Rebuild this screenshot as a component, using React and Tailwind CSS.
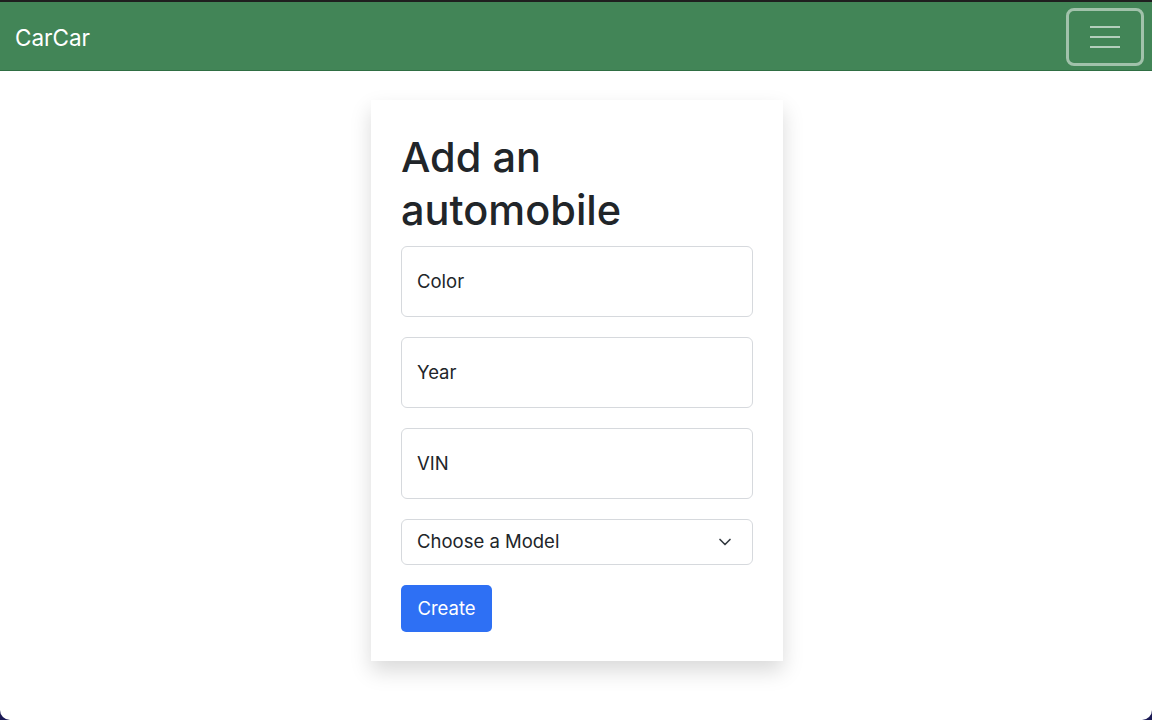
import { ChevronDown } from 'lucide-react';

const fields = ['Color', 'Year', 'VIN'];

export default function App() {
  return (
    <div className="h-[720px] w-[1152px] overflow-hidden bg-[#1b1a55]" style={{ fontFamily: 'Inter, "Noto Sans", sans-serif' }}>
      <div className="h-full rounded-b-[10px] bg-white">
        {/* Navbar */}
        <nav className="flex h-[71px] items-center justify-between border-t-2 border-b border-t-[#1f1f1f] border-b-[#2f6e43] bg-[#428557] pl-[15px] pr-[8px]">
          <span className="mt-[5px] text-[22.5px] leading-none text-white">CarCar</span>
          <button className="mt-[2px] flex h-[58px] w-[78px] items-center justify-center rounded-[8px] border-[3px] border-white/50">
            <svg width="30" height="22" viewBox="0 0 30 22" fill="none" stroke="rgba(255,255,255,0.6)" strokeWidth="2">
              <path d="M0 1h30M0 11h30M0 21h30" />
            </svg>
          </button>
        </nav>

        {/* Form card */}
        <div className="flex justify-center pt-[29px]">
          <div className="ml-[2px] w-[412px] bg-white px-[30px] pt-[31px] pb-[29px] shadow-[0_10px_20px_rgba(0,0,0,0.15)]">
            <h1 className="mb-[9px] text-[41.5px] leading-[53px] font-medium text-[#212529]">Add an automobile</h1>
            <div className="flex flex-col gap-[20px]">
              {fields.map((f) => (
                <div
                  key={f}
                  className="flex h-[71px] items-center rounded-[6px] border border-[#d6d9dd] px-[15px] text-[18.5px] text-[#212529]"
                >
                  {f}
                </div>
              ))}
              <div className="flex h-[46px] items-center justify-between rounded-[6px] border border-[#d6d9dd] pl-[15px] pr-[17px] text-[18.5px] text-[#212529]">
                <span>Choose a Model</span>
                <ChevronDown size={20} strokeWidth={2} className="text-[#343a40]" />
              </div>
              <div>
                <button className="h-[47px] w-[91px] rounded-[5px] bg-[#2e70f4] text-[18.5px] text-white">Create</button>
              </div>
            </div>
          </div>
        </div>
      </div>
    </div>
  );
}
